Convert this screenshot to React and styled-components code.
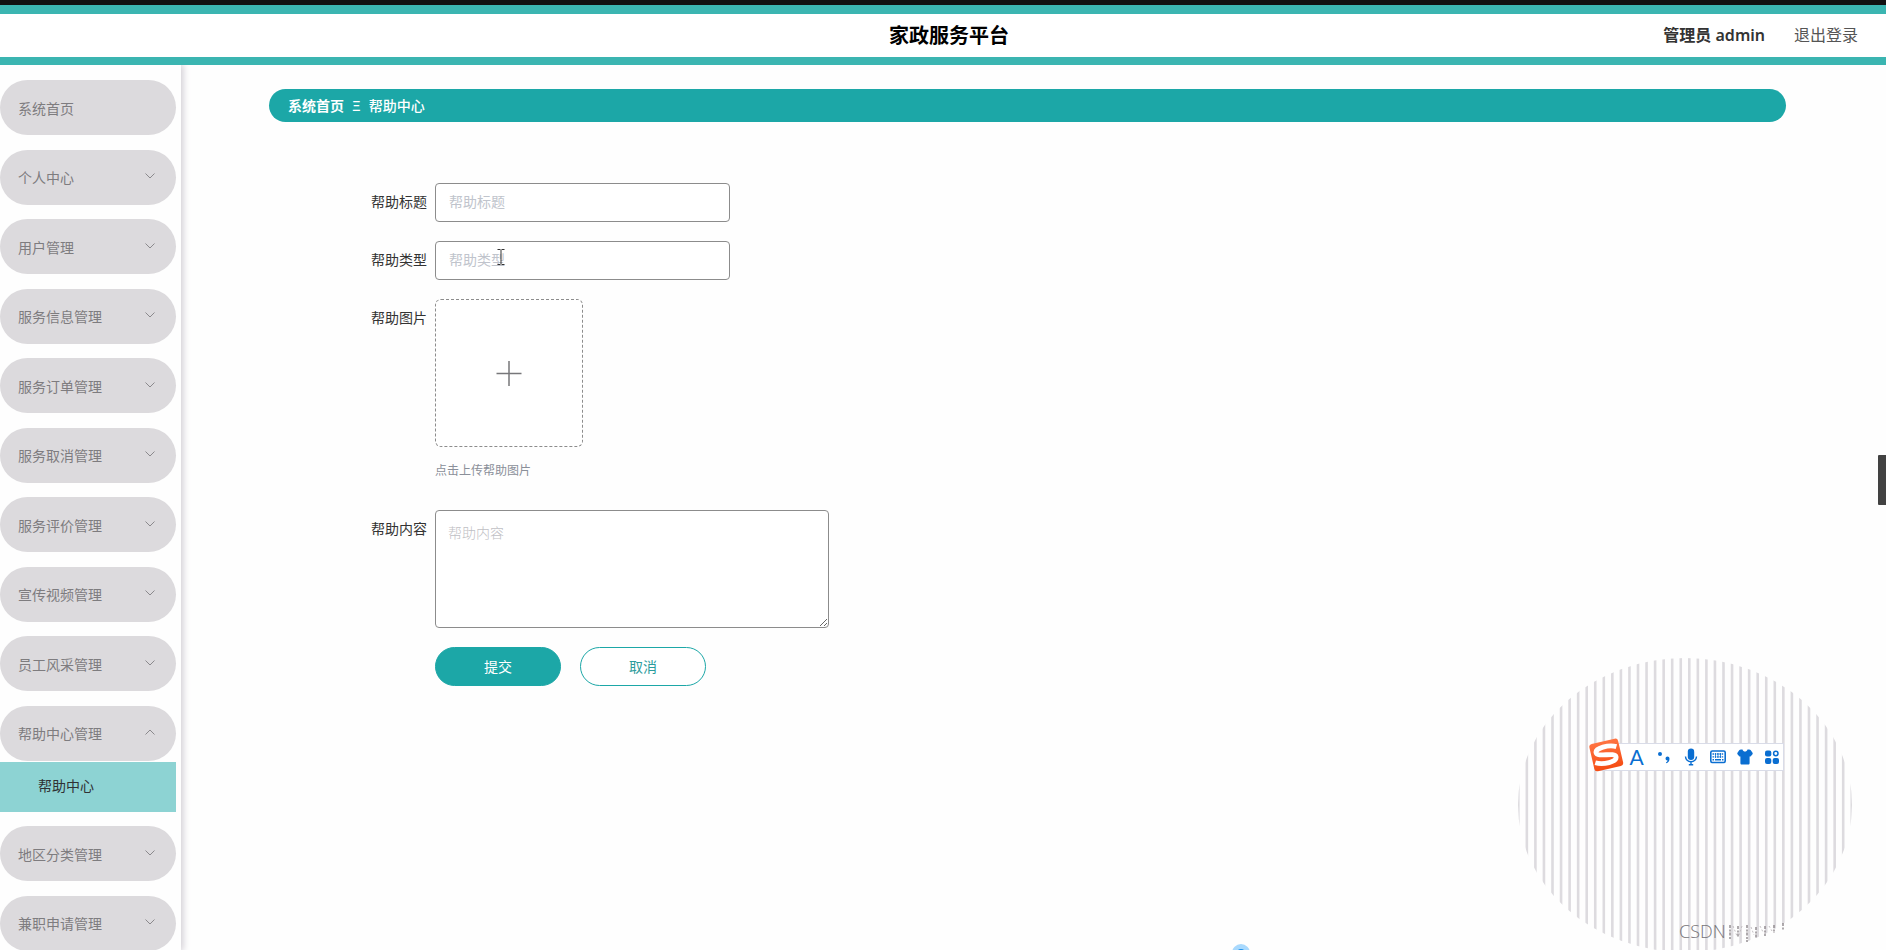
import React from "react";
import styled, { createGlobalStyle } from "styled-components";

const TEAL = "#1ca7a7";

const GlobalStyle = createGlobalStyle`
  *, *::before, *::after { box-sizing: border-box; }
  body {
    margin: 0;
    background: #fefefe;
    color: #333;
    font: 14px/20px "Noto Sans", "Noto Sans CJK SC", sans-serif;
  }
  button, input, textarea { font: inherit; }
  a { color: inherit; text-decoration: none; }
`;

const Page = styled.div`
  display: flex;
  flex-direction: column;
  height: 100vh;
  overflow: hidden;
  position: relative;
`;

const Header = styled.header`
  flex: none;
  position: relative;
  z-index: 1;
  display: grid;
  grid-template-columns: 1fr auto 1fr;
  align-items: center;
  height: 65px;
  padding: 0 28px 0 40px;
  border-top: 5px solid #111;
  border-bottom: 8px solid #3bb5b1;
  background: #fff;
  box-shadow: inset 0 9px 0 #3bb5b1;
`;

const Title = styled.h1`
  grid-column: 2;
  margin: 9px 0 0;
  font-size: 20px;
  line-height: 28px;
  font-weight: 700;
  color: #000;
`;

const Account = styled.div`
  display: flex;
  justify-content: flex-end;
  gap: 29px;
  margin-top: 8px;
  font-size: 16px;
  line-height: 24px;
  color: #555;
`;

const UserName = styled.span`
  font-weight: 600;
  color: #333;
`;

const Body = styled.div`
  flex: 1;
  display: flex;
  min-height: 0;
`;

const Sidebar = styled.nav`
  flex: none;
  width: 181px;
  padding: 15px 5px 0 0;
  overflow: hidden;
  background: #fefefe;
  box-shadow: 1px 0 7px 1px #cfcbd2;
`;

const Menu = styled.ul`
  display: flex;
  flex-direction: column;
  justify-content: space-between;
  gap: 14px;
  min-height: calc(100vh - 79px);
  margin: 0;
  padding: 0;
  list-style: none;
`;

const MenuButton = styled.button`
  display: flex;
  align-items: center;
  justify-content: space-between;
  width: 100%;
  height: 55px;
  padding: 2px 20px 0 18px;
  border: 0;
  border-radius: 28px;
  background: #dcdadd;
  color: #7e7c7f;
  text-align: left;

  svg {
    margin-bottom: 4px;
  }
`;

const SubLink = styled.a`
  display: block;
  height: 50px;
  margin-top: 1px;
  padding-left: 38px;
  line-height: 48px;
  background: #8dd3d3;
  color: #303133;
`;

const Main = styled.main`
  flex: 1;
  min-width: 0;
  padding: 24px 100px 0 88px;
`;

const Breadcrumb = styled.div`
  display: flex;
  align-items: center;
  gap: 8px;
  height: 33px;
  padding: 0 19px;
  border-radius: 17px;
  background: ${TEAL};
  color: #fff;

  a {
    font-weight: 700;
  }
`;

const Current = styled.span`
  font-weight: 500;
`;

const Form = styled.form`
  display: flex;
  flex-direction: column;
  gap: 19px;
  padding-top: 61px;
`;

const Field = styled.div`
  display: flex;
  align-items: flex-start;
  gap: 8px;
`;

const Label = styled.label`
  width: 158px;
  line-height: 38px;
  text-align: right;
`;

const TextInput = styled.input`
  width: 295px;
  height: 39px;
  padding: 0 13px 2px;
  border: 1px solid #8c8c8c;
  border-radius: 4px;
  background: #fff;
  outline: 0;

  &::placeholder {
    color: #c0c4cc;
    opacity: 1;
  }
`;

const TextArea = styled.textarea`
  display: block;
  width: 394px;
  height: 118px;
  padding: 12px;
  border: 1px solid #8c8c8c;
  border-radius: 4px;
  background: #fff;
  outline: 0;
  resize: vertical;

  &::placeholder {
    color: #c0c0c4;
    font-weight: 300;
    opacity: 1;
  }
`;

const UploadColumn = styled.div`
  display: flex;
  flex-direction: column;
  gap: 14px;
  padding-bottom: 10px;
`;

const UploadButton = styled.button`
  display: flex;
  align-items: center;
  justify-content: center;
  width: 148px;
  height: 148px;
  border: 1px dashed #8c8c8c;
  border-radius: 6px;
  background: #fff;
`;

const Hint = styled.span`
  font-size: 12px;
  color: #8a8f99;
`;

const Actions = styled.div`
  display: flex;
  gap: 19px;
  padding-left: 166px;
`;

const ActionButton = styled.button`
  width: 126px;
  height: 39px;
  border: 1px solid ${TEAL};
  border-radius: 20px;
  background: ${(p) => (p.$primary ? TEAL : "#fff")};
  color: ${(p) => (p.$primary ? "#fff" : "#2c9c9c")};
`;

const Pointer = styled.svg`
  position: absolute;
  left: 497px;
  top: 248px;
`;

const SideHandle = styled.div`
  position: absolute;
  right: 0;
  top: 455px;
  width: 8px;
  height: 50px;
  border-radius: 1px 0 0 1px;
  background: #424242;
`;

const Bubble = styled.div`
  position: absolute;
  left: 1232px;
  bottom: -12px;
  width: 18px;
  height: 18px;
  border: 5px solid #a9d9fd;
  border-radius: 50%;
  background: #1890ee;
`;

const Stamp = styled.svg`
  position: absolute;
  right: 34px;
  bottom: -2px;
`;

const InputBar = styled.div`
  position: absolute;
  right: 102px;
  bottom: 179px;
  display: flex;
  justify-content: flex-end;
  width: 189px;
  height: 28px;
  border: 1px solid #d9dce8;
  background: #fff;
`;

const BarButton = styled.button`
  display: flex;
  align-items: center;
  justify-content: center;
  width: 27px;
  height: 26px;
  padding: 0;
  border: 0;
  background: none;
  color: #0a6ed1;
  font: 21px/24px Lato, sans-serif;
`;

const BarKeys = styled.div`
  display: flex;
  margin-right: -2px;
`;

const BarLogo = styled.svg`
  position: absolute;
  left: -9px;
  top: -9px;
`;

const menu = [
  { label: "系统首页", leaf: true },
  { label: "个人中心" },
  { label: "用户管理" },
  { label: "服务信息管理" },
  { label: "服务订单管理" },
  { label: "服务取消管理" },
  { label: "服务评价管理" },
  { label: "宣传视频管理" },
  { label: "员工风采管理" },
  { label: "帮助中心管理", children: ["帮助中心"] },
  { label: "地区分类管理" },
  { label: "兼职申请管理" },
];

function Chevron({ up }) {
  return (
    <svg width="12" height="8" viewBox="0 0 12 8" fill="none" stroke="#8b898c">
      <path d={up ? "M1.5 6.5 6 2l4.500 4.500" : "M1.500 1.500 6 6l4.500-4.500"} />
    </svg>
  );
}

function StripedStamp() {
  const stripes = Array.from({ length: 40 }, (_, i) => -1 + i * 8.55);
  return (
    <Stamp width="334" height="294" viewBox="0 0 334 294" aria-hidden="true">
      <clipPath id="stampEdge">
        <ellipse cx="167" cy="147" rx="167" ry="147" />
      </clipPath>
      <g clipPath="url(#stampEdge)" fill="#dddbdf">
        {stripes.map((x) => (
          <rect key={x} x={x} y="0" width="2.600" height="294" />
        ))}
      </g>
      <text x="161" y="280" fontSize="18" fontWeight="300" fontFamily="'Open Sans', sans-serif" fill="#77757a">
        CSDN
      </text>
      <g stroke="#8d878b" strokeWidth="1.400" strokeDasharray="3 1.500 2 1">
        <path d="M212 267v14M220 268v12M229 267v17M238 269v12M247 268v10M256 267v8M265 265v7" />
      </g>
      <g stroke="#c4bfc3" strokeDasharray="2 2">
        <path d="M215 268l4 10M224 268l-3 9M233 269l3 8M242 268l3 6M251 268l3 5" />
      </g>
    </Stamp>
  );
}

function InputMethodBar() {
  return (
    <InputBar>
      <BarLogo width="38" height="38" viewBox="0 0 38 38" aria-hidden="true">
        <defs>
          <linearGradient id="logoFill" x1="0" y1="0" x2="0" y2="1">
            <stop offset="0" stopColor="#ff7442" />
            <stop offset="1" stopColor="#f54d14" />
          </linearGradient>
        </defs>
        <g transform="rotate(-13 19 20)">
          <rect x="4.500" y="6" width="29.500" height="28" rx="3" fill="url(#logoFill)" />
          <path
            d="M31 14.200C24 10.200 9.800 11 9.800 15.600C9.800 21 28.400 18.600 28.400 23.800C28.400 29.400 14 29.200 6.800 25.200"
            fill="none"
            stroke="#fff"
            strokeWidth="4.800"
          />
        </g>
      </BarLogo>
      <BarKeys>
        <BarButton type="button">A</BarButton>
        <BarButton type="button" aria-label="标点">
          <svg width="16" height="16" viewBox="0 0 16 16" fill="currentColor">
            <circle cx="4" cy="5" r="2" />
            <path d="M9.500 9.500a2 2 0 1 1 4 0c0 2.500-1 4-3 4.800l-.6-.9c1-.4 1.600-1.100 1.700-1.900a2 2 0 0 1-2.100-2Z" />
          </svg>
        </BarButton>
        <BarButton type="button" aria-label="语音">
          <svg width="16" height="18" viewBox="0 0 16 18">
            <rect x="4.800" y=".5" width="6.400" height="11.500" rx="3.200" fill="currentColor" />
            <path d="M2.500 8.500a5.500 5.200 0 0 0 11 0M8 14v3M5.800 16.800h4.400" fill="none" stroke="currentColor" strokeWidth="1.400" />
          </svg>
        </BarButton>
        <BarButton type="button" aria-label="键盘">
          <svg width="16" height="14" viewBox="0 0 16 14" fill="none" stroke="currentColor">
            <rect x=".8" y="1" width="14.400" height="11.500" rx="1.500" strokeWidth="1.600" />
            <path d="M2.500 4h11M2.500 6.800h11" strokeWidth="1.300" strokeDasharray="1.500 .8" />
            <path d="M2.500 9.800h1.500M5 9.800h6M12 9.800h1.500" strokeWidth="1.400" />
            <path d="M5.500 3v5M8 3v5M10.500 3v5" strokeWidth=".8" />
          </svg>
        </BarButton>
        <BarButton type="button" aria-label="皮肤">
          <svg width="16" height="16" viewBox="0 0 16 16" fill="currentColor">
            <path d="M4 .5h1.500c.5 1.500 1.300 2 2.500 2s2-.5 2.500-2H12c.8 0 1.400.3 1.800.8l1.700 2.500c.3.500.3 1 0 1.400L14 7c-.4.500-.8.600-1.400.5V14c0 1-.5 1.500-1.500 1.500H4.900c-1 0-1.500-.5-1.500-1.500V7.500C2.800 7.600 2.400 7.500 2 7L.5 5.200c-.3-.4-.3-.9 0-1.400l1.700-2.500C2.600.8 3.200.5 4 .5Z" />
          </svg>
        </BarButton>
        <BarButton type="button" aria-label="工具箱">
          <svg width="16" height="16" viewBox="0 0 16 16" fill="currentColor">
            <rect x="1" y="1.500" width="6.300" height="6" rx="2" />
            <rect x="1" y="9" width="6.300" height="6" rx="2" />
            <rect x="8.700" y="9" width="6.300" height="6" rx="2" />
            <circle cx="11.800" cy="4.500" r="2.200" fill="none" stroke="currentColor" strokeWidth="1.500" />
          </svg>
        </BarButton>
      </BarKeys>
    </InputBar>
  );
}

export default function App() {
  return (
    <Page>
      <GlobalStyle />
      <Header>
        <Title>家政服务平台</Title>
        <Account>
          <UserName>管理员 admin</UserName>
          <a href="#logout">退出登录</a>
        </Account>
      </Header>
      <Body>
        <Sidebar>
          <Menu>
            {menu.map((item) => (
              <li key={item.label}>
                <MenuButton type="button">
                  {item.label}
                  {!item.leaf && <Chevron up={Boolean(item.children)} />}
                </MenuButton>
                {item.children?.map((child) => (
                  <SubLink key={child} href="#help">
                    {child}
                  </SubLink>
                ))}
              </li>
            ))}
          </Menu>
        </Sidebar>
        <Main>
          <Breadcrumb>
            <a href="#home">系统首页</a>
            <span>Ξ</span>
            <Current>帮助中心</Current>
          </Breadcrumb>
          <Form>
            <Field>
              <Label htmlFor="title">帮助标题</Label>
              <TextInput id="title" placeholder="帮助标题" />
            </Field>
            <Field>
              <Label htmlFor="type">帮助类型</Label>
              <TextInput id="type" placeholder="帮助类型" />
            </Field>
            <Field>
              <Label htmlFor="picture">帮助图片</Label>
              <UploadColumn>
                <UploadButton id="picture" type="button">
                  <svg width="28" height="28" viewBox="0 0 28 28" stroke="#77777a" strokeWidth="1.500">
                    <path d="M14 2v25M1.500 14.500h25" />
                  </svg>
                </UploadButton>
                <Hint>点击上传帮助图片</Hint>
              </UploadColumn>
            </Field>
            <Field>
              <Label htmlFor="content">帮助内容</Label>
              <TextArea id="content" placeholder="帮助内容" />
            </Field>
            <Actions>
              <ActionButton type="button" $primary>
                提交
              </ActionButton>
              <ActionButton type="button">取消</ActionButton>
            </Actions>
          </Form>
        </Main>
      </Body>
      <Pointer width="8" height="18" viewBox="0 0 8 18" fill="none" stroke="#333" aria-hidden="true">
        <path d="M.5 1.500h3M4.500 1.500h3M4 2v14M.5 16.500h3M4.500 16.500h3" />
      </Pointer>
      <SideHandle />
      <Bubble />
      <StripedStamp />
      <InputMethodBar />
    </Page>
  );
}
